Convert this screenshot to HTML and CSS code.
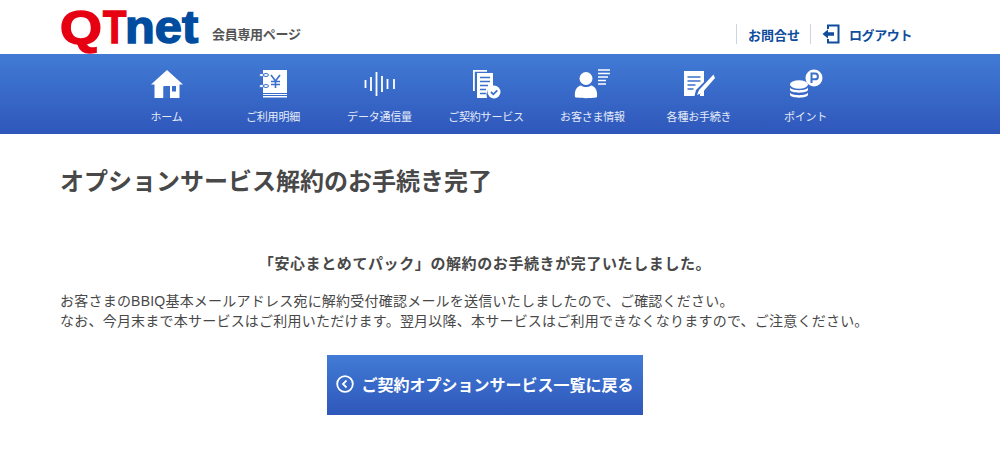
FILE: index.html
```html
<!DOCTYPE html>
<html lang="ja">
<head>
  <meta charset="UTF-8">
  <title>オプションサービス解約のお手続き完了</title>
  <link rel="stylesheet" href="styles.css">
</head>
<body>

  <header class="site-header">
    <div class="brand">
      <span class="logo"><span class="logo-q">Q</span><span class="logo-t">T</span><span class="logo-net">net</span></span>
      <span class="brand-sub">会員専用ページ</span>
    </div>
    <div class="header-links">
      <a class="header-link">お問合せ</a>
      <a class="header-link">
        <svg class="logout-icon" width="18" height="20" viewBox="0 0 18 20">
          <path d="M6 5V1.500h10.500v17H6V15" fill="none" stroke="#0f4c9c" stroke-width="2"/>
          <path d="M0.500 10l5.500-4.500v2.700h6v3.600h-6v2.700z" fill="#0f4c9c"/>
        </svg>
        <span class="logout-label">ログアウト</span>
      </a>
    </div>
  </header>

  <nav class="main-nav">
    <a class="nav-item">
      <svg width="34" height="30" viewBox="0 0 34 30">
        <path d="M17 1L33 15.500h-3.500V29H20V18h-6.500v11H4.500V15.500H1z" fill="#fff"/>
        <rect x="19" y="17" width="7" height="5.500" fill="#3a70cc"/>
        <rect x="13.500" y="17" width="6.500" height="12" fill="#3a70cc"/>
        <rect x="15.500" y="19" width="2.500" height="10" fill="#3a70cc"/>
        <rect x="20" y="16.500" width="2" height="7" fill="#fff"/>
      </svg>
      <span>ホーム</span>
    </a>
    <a class="nav-item">
      <svg width="30" height="30" viewBox="0 0 30 30">
        <path d="M5 1h24v23H5z" fill="#fff"/>
        <rect x="5" y="25" width="24" height="1" fill="#fff"/>
        <rect x="5" y="27" width="24" height="1.500" fill="#fff"/>
        <g fill="#fff" stroke="#3a70cc" stroke-width="1">
          <ellipse cx="3.500" cy="6" rx="2.500" ry="1.500"/><ellipse cx="8" cy="6" rx="2.500" ry="1.500"/>
          <ellipse cx="3.500" cy="17" rx="2.500" ry="1.500"/><ellipse cx="8" cy="17" rx="2.500" ry="1.500"/>
        </g>
        <path d="M13 6l4.500 6 4.500-6M17.500 12v7M13 12.500h9M13 15.500h9" fill="none" stroke="#3a70cc" stroke-width="1.600"/>
      </svg>
      <span>ご利用明細</span>
    </a>
    <a class="nav-item">
      <svg width="32" height="30" viewBox="0 0 32 30">
        <g fill="none" stroke="#fff" stroke-width="1.800">
          <path d="M1.500 11v8M7 8v14M12.500 3v24M18 7v16M23.500 10v10M30 10v10"/>
        </g>
      </svg>
      <span>データ通信量</span>
    </a>
    <a class="nav-item">
      <svg width="30" height="30" viewBox="0 0 30 30">
        <path d="M2 1h14v1.800H3.800V22H2z" fill="#fff"/>
        <path d="M6 4h16v14a8 8 0 0 0-6 11H6z" fill="#fff"/>
        <path d="M9 8.500h10M9 12.500h10M9 16.500h8M9 20.500h6M9 24.500h6" stroke="#3a70cc" stroke-width="1.500"/>
        <circle cx="23" cy="23" r="6.500" fill="#fff"/>
        <path d="M20 23l2.300 2.300 4-4" fill="none" stroke="#3a70cc" stroke-width="1.800"/>
      </svg>
      <span>ご契約サービス</span>
    </a>
    <a class="nav-item">
      <svg width="38" height="30" viewBox="0 0 38 30">
        <circle cx="12" cy="9.500" r="6.500" fill="#fff"/>
        <path d="M1 28c-1-8 3-11 6-11.500 3 2 7 2 10 0 3 .5 7 3.500 6 11.500-1 1.500-21 1.500-22 0z" fill="#fff"/>
        <path d="M24 1h12M24 4.500h12M24 8h10M24 11.500h8M24 15h8" stroke="#fff" stroke-width="1.300"/>
      </svg>
      <span>お客さま情報</span>
    </a>
    <a class="nav-item">
      <svg width="32" height="30" viewBox="0 0 32 30">
        <path d="M1 2h20v11l-8 8-1.500 6H1z" fill="#fff"/>
        <path d="M4.500 8h13M4.500 12h13M4.500 16h8M4.500 20h6" stroke="#3a70cc" stroke-width="1.600"/>
        <path d="M30.500 5.500L16 21l-2 5 5-2L32 9z" fill="#fff"/>
        <path d="M17 27h4v-6l-4 4z" fill="#fff"/>
      </svg>
      <span>各種お手続き</span>
    </a>
    <a class="nav-item">
      <svg width="34" height="30" viewBox="0 0 34 30">
        <circle cx="25" cy="9" r="8.500" fill="#fff"/>
        <path d="M22.500 14V4.500h3.500a2.900 2.900 0 0 1 0 5.800h-3.500" fill="none" stroke="#3a70cc" stroke-width="2"/>
        <ellipse cx="10" cy="15.500" rx="9" ry="4.200" fill="#fff"/>
        <path d="M1 18.500c1 3.500 17 3.500 18 0v2.500c-1 3.500-17 3.500-18 0z" fill="#fff"/>
        <path d="M1 23.500c1 3.500 17 3.500 18 0v2.500c-1 3.500-17 3.500-18 0z" fill="#fff"/>
      </svg>
      <span>ポイント</span>
    </a>
  </nav>

  <main class="content">
    <h1 class="page-title">オプションサービス解約のお手続き完了</h1>
    <p class="lead">「安心まとめてパック」の解約のお手続きが完了いたしました。</p>
    <p class="notice">お客さまのBBIQ基本メールアドレス宛に解約受付確認メールを送信いたしましたので、ご確認ください。<br>なお、今月末まで本サービスはご利用いただけます。翌月以降、本サービスはご利用できなくなりますので、ご注意ください。</p>
    <div class="actions">
      <a class="back-button">
        <svg width="18" height="18" viewBox="0 0 18 18">
          <circle cx="9" cy="9" r="7.800" fill="none" stroke="#fff" stroke-width="1.800"/>
          <path d="M10.500 5.500L7 9l3.500 3.500" fill="none" stroke="#fff" stroke-width="1.800"/>
        </svg>
        ご契約オプションサービス一覧に戻る
      </a>
    </div>
  </main>

</body>
</html>
```

FILE: styles.css
```css
body {
  margin: 0;
  background: #fff;
  color: #484848;
  font-family: "Liberation Sans", "Noto Sans CJK JP", sans-serif;
  font-size: 14px;
}

a {
  text-decoration: none;
}

.site-header {
  height: 54px;
  padding: 0 88px 0 60px;
  display: flex;
  justify-content: space-between;
  align-items: flex-end;
}

.brand {
  display: flex;
  align-items: flex-end;
  height: 54px;
}

.logo {
  display: flex;
  width: 152px;
  height: 44px;
  font-family: "Liberation Sans", sans-serif;
  font-weight: bold;
  font-size: 46px;
  line-height: 44px;
  margin-bottom: 5px;
  -webkit-text-stroke: 1.5px;
}

.logo-q {
  display: inline-block;
  width: 43px;
  color: #e60012;
  transform: scaleX(1.17);
  transform-origin: left;
}

.logo-t {
  display: inline-block;
  width: 22px;
  color: #e60012;
  transform: scaleX(0.83);
  transform-origin: left;
}

.logo-net {
  display: inline-block;
  color: #004da0;
  transform: scaleX(1.06);
  transform-origin: left;
}

.brand-sub {
  font-size: 13px;
  font-weight: bold;
  letter-spacing: -0.3px;
  color: #555;
  margin-bottom: 11px;
}

.header-links {
  display: flex;
  align-items: center;
  margin-bottom: 10px;
}

.header-link {
  display: flex;
  align-items: center;
  height: 20px;
  padding-left: 11px;
  margin-left: 10px;
  border-left: 1px solid #ccd4e4;
  color: #0f4c9c;
  font-size: 13px;
  font-weight: bold;
}

.logout-icon {
  margin-right: 9px;
}

.logout-label {
  letter-spacing: -0.4px;
}

.main-nav {
  height: 80px;
  background: linear-gradient(#417bd5, #2f57bb);
  display: flex;
  justify-content: center;
  padding-right: 28px;
}

.nav-item {
  width: 106.500px;
  display: flex;
  flex-direction: column;
  align-items: center;
  padding-top: 15px;
  color: #e4ebf8;
  font-size: 11px;
  letter-spacing: -0.2px;
  box-sizing: border-box;
}

.nav-item span {
  margin-top: 9px;
}

.content {
  padding: 0 90px 0 60px;
}

.page-title {
  margin: 33px 0 0;
  font-size: 24px;
  line-height: 30px;
  color: #484848;
}

.lead {
  margin: 57px 0 0;
  text-align: center;
  font-weight: bold;
  font-size: 15px;
  letter-spacing: 0.6px;
  line-height: 20px;
}

.notice {
  margin: 17px 0 0;
  font-size: 14px;
  letter-spacing: 0.22px;
  line-height: 20px;
}

.actions {
  display: flex;
  justify-content: center;
  margin-top: 24px;
}

.back-button {
  width: 316px;
  height: 60px;
  display: flex;
  align-items: center;
  justify-content: center;
  gap: 7px;
  padding-bottom: 2px;
  background: linear-gradient(#417bd5, #2f57bb);
  color: #fff;
  font-size: 16px;
  font-weight: bold;
  box-sizing: border-box;
}
```
